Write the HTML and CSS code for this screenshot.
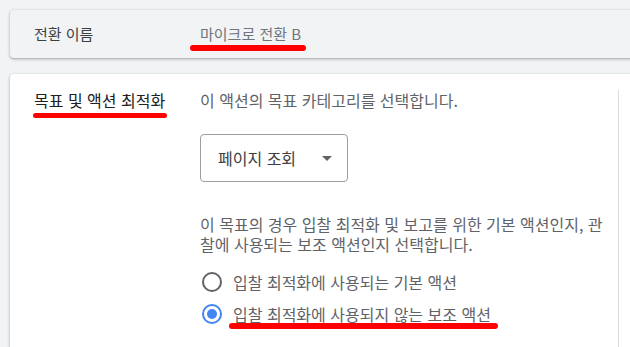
FILE: index.html
```html
<!DOCTYPE html>
<html lang="ko">
<head>
<meta charset="utf-8">
<link rel="stylesheet" href="styles.css">
</head>
<body>
<div class="wrap">
  <div class="name-card">
    <div class="name-label">전환 이름</div>
    <div class="name-value"><span class="mark mark-name">마이크로 전환 B</span></div>
  </div>
  <div class="form-card">
    <div class="section">
      <div class="section-label"><span class="mark mark-title">목표 및 액션 최적화</span></div>
      <div class="section-body">
        <p class="desc">이 액션의 목표 카테고리를 선택합니다.</p>
        <div class="select">
          <span class="select-text">페이지 조회</span>
          <span class="caret"></span>
        </div>
        <p class="desc desc-2">이 목표의 경우 입찰 최적화 및 보고를 위한 기본 액션인지, 관찰에 사용되는 보조 액션인지 선택합니다.</p>
        <div class="radios">
          <div class="radio-row">
            <span class="radio"></span>
            <span class="radio-label">입찰 최적화에 사용되는 기본 액션</span>
          </div>
          <div class="radio-row">
            <span class="radio checked"></span>
            <span class="radio-label"><span class="mark mark-radio">입찰 최적화에 사용되지 않는 보조 액션</span></span>
          </div>
        </div>
      </div>
    </div>
  </div>
</div>
</body>
</html>
```

FILE: styles.css
```css
* { box-sizing: border-box; }

html, body {
  margin: 0;
  height: 100%;
}

body {
  background: #f1f3f4;
  font-family: "Noto Sans CJK KR", "Noto Sans", sans-serif;
  overflow: hidden;
  padding: 10px 0 0 10px;
}

.wrap {
  width: 640px;
}

.name-card {
  height: 48px;
  border-radius: 4px;
  background: #f1f3f4;
  box-shadow: 0 1px 2px rgba(60, 64, 67, 0.3), 0 1px 3px 1px rgba(60, 64, 67, 0.12);
  display: grid;
  grid-template-columns: 166px 1fr;
  align-items: center;
  padding: 0 0 0 24px;
  font-size: 15px;
  line-height: 20px;
}

.name-label {
  color: #3c4043;
}

.name-value {
  color: #70757a;
}

.mark {
  position: relative;
  display: inline-block;
}

.mark::after {
  content: "";
  position: absolute;
  background: #ff0000;
  border-radius: 3px;
}

.mark-name::after {
  left: -10px;
  right: -5px;
  top: calc(100% + 1px);
  height: 6px;
}

.form-card {
  margin-top: 16px;
  background: #ffffff;
  border-radius: 4px 0 0 0;
  box-shadow: 0 1px 2px rgba(60, 64, 67, 0.3), 0 1px 3px 1px rgba(60, 64, 67, 0.12);
  padding-top: 16px;
  height: 280px;
}

.section {
  width: 609px;
  border-right: 1px solid #dadce0;
  display: grid;
  grid-template-columns: 166px 1fr;
  padding-left: 24px;
  height: 100%;
}

.section-label {
  font-size: 16px;
  line-height: 20px;
  color: #202124;
}

.mark-title::after {
  left: -1px;
  right: -2px;
  top: calc(100% + 3px);
  height: 5px;
}

.section-body {
  padding-right: 8px;
}

.desc {
  margin: 0;
  font-size: 16px;
  line-height: 20px;
  color: #5f6368;
  word-break: break-all;
}

.select {
  margin-top: 24px;
  width: 148px;
  height: 48px;
  border: 1px solid #9aa0a6;
  border-radius: 4px;
  display: flex;
  align-items: center;
  justify-content: space-between;
  padding: 0 15px 0 17px;
}

.select-text {
  font-size: 16px;
  color: #3c4043;
  line-height: 20px;
}

.caret {
  width: 0;
  height: 0;
  border-left: 5px solid transparent;
  border-right: 5px solid transparent;
  border-top: 5px solid #5f6368;
}

.desc-2 {
  margin-top: 32px;
}

.radios {
  margin-top: 12px;
}

.radio-row {
  height: 32px;
  display: flex;
  align-items: center;
  gap: 11px;
  padding-left: 2px;
}

.radio {
  width: 20px;
  height: 20px;
  border-radius: 50%;
  border: 2px solid #5f6368;
  display: flex;
  align-items: center;
  justify-content: center;
  flex: none;
}

.radio.checked {
  border-color: #4285f4;
}

.radio.checked::before {
  content: "";
  width: 10px;
  height: 10px;
  border-radius: 50%;
  background: #4285f4;
}

.radio-label {
  font-size: 16px;
  line-height: 20px;
  color: #5f6368;
}

.mark-radio::after {
  left: -4px;
  right: -7px;
  top: calc(100% - 1px);
  height: 6px;
}
```
